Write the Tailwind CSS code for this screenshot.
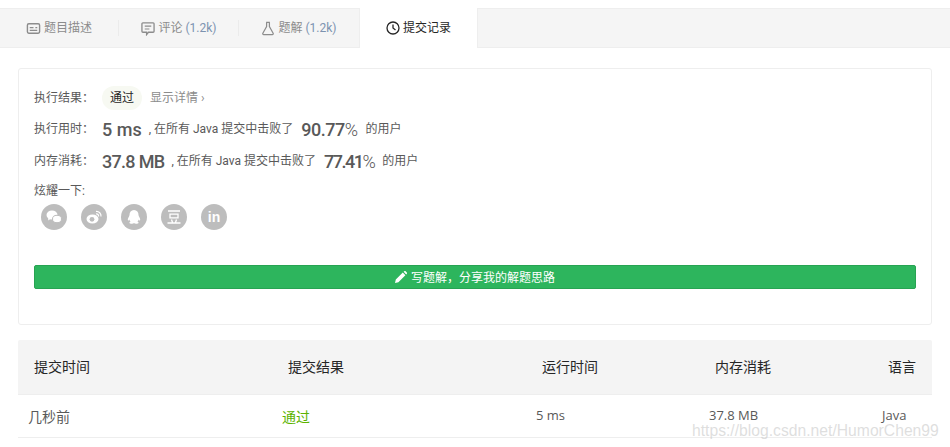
<!DOCTYPE html>
<html><head><meta charset="utf-8"><script src="https://cdn.jsdelivr.net/npm/@tailwindcss/browser@4"></script></head>
<body class="bg-white">
<div class="relative w-[950px] h-[447px] overflow-hidden font-['Roboto','Noto_Sans_CJK_SC',sans-serif] text-[12px] text-[#595959]">
  <div class="h-[8px]"></div>
  <!-- tabs -->
  <div class="flex h-[40px] bg-[#f5f5f5] border-y border-[#eeeeee] text-[#8c8c8c]">
    <div class="w-[119px] flex items-center justify-center"><div class="flex items-center gap-[3px] w-full justify-center border-r border-[#ebebeb] h-[16px]">
      <svg class="w-[15px] h-[15px]" viewBox="0 0 16 16" fill="none" stroke="#8c8c8c" stroke-width="1.5"><rect x="1.5" y="3" width="13" height="10" rx="1.500"/><path d="M4 7h4M4 10h8M10 7h2" stroke-width="1.200"/></svg><span>题目描述</span></div></div>
    <div class="w-[120px] flex items-center justify-center"><div class="flex items-center gap-[3px] w-full justify-center border-r border-[#ebebeb] h-[16px] pl-[1px]">
      <svg class="w-[14px] h-[15px]" viewBox="0 0 15 16" fill="none" stroke="#8c8c8c" stroke-width="1.400"><path d="M2 2h11a1 1 0 0 1 1 1v8a1 1 0 0 1-1 1H8l-2 2.500V12H2a1 1 0 0 1-1-1V3a1 1 0 0 1 1-1z"/><path d="M4 5.500h7M4 8.500h5" stroke-width="1.200"/></svg><span>评论 <span class="text-[#7c93b0]">(1.2k)</span></span></div></div>
    <div class="w-[120px] flex items-center justify-center gap-[3px]">
      <svg class="w-[14px] h-[15px]" viewBox="0 0 14 16" fill="none" stroke="#8c8c8c" stroke-width="1.300"><path d="M5 1.500h4M5.500 1.500v4.500L1.500 13a1 1 0 0 0 1 1.500h9a1 1 0 0 0 1-1.500L8.500 6V1.500"/></svg><span>题解 <span class="text-[#7c93b0]">(1.2k)</span></span></div>
    <div class="w-[119px] h-[40px] -mt-px bg-white border-x border-[#eeeeee] flex items-center justify-center gap-[3px] text-[#262626]">
      <svg class="w-[14px] h-[14px]" viewBox="0 0 14 14" fill="none" stroke="#262626" stroke-width="1.300"><circle cx="7" cy="7" r="6"/><path d="M7 3.500V7l2.500 2"/></svg><span>提交记录</span></div>
  </div>
  <!-- card -->
  <div class="mx-[18px] mt-[20px] w-[914px] h-[257px] border border-[#eeeeee] rounded-[3px] px-[15px] pt-[15px]">
    <div class="flex items-center h-[26px] pt-[1px]">
      <span class="w-[68px]">执行结果&#65306;</span>
      <span class="w-[40px] h-[24px] rounded-full bg-[#f7f9f2] text-[#262626] flex items-center justify-center">通过</span>
      <span class="ml-[8px] text-[#8c8c8c]">显示详情 ›</span>
    </div>
    <div class="flex items-center h-[24px] mt-[7px]">
      <span class="w-[68px]">执行用时&#65306;</span>
      <span class="text-[18px] font-medium">5 ms</span>
      <span class="ml-[7px]">, 在所有 Java 提交中击败了</span>
      <span class="ml-[8px] text-[18px] font-medium tracking-[-0.5px]">90.77<span class="font-light">%</span></span>
      <span class="ml-[8px]">的用户</span>
    </div>
    <div class="flex items-center h-[24px] mt-[8px]">
      <span class="w-[68px]">内存消耗&#65306;</span>
      <span class="text-[18px] font-medium tracking-[-0.7px]">37.8 MB</span>
      <span class="ml-[7px]">, 在所有 Java 提交中击败了</span>
      <span class="ml-[8px] text-[18px] font-medium tracking-[-1.500px]">77.41<span class="font-light">%</span></span>
      <span class="ml-[8px]">的用户</span>
    </div>
    <div class="mt-[9px] h-[18px] leading-[18px]">炫耀一下:</div>
    <div class="flex gap-[14px] ml-[7px] mt-[4px]">
      <div class="w-[26px] h-[26px] rounded-full bg-[#bdbdbd] flex items-center justify-center"><svg class="w-[18px] h-[18px]" viewBox="0 0 18 18" fill="#fff"><ellipse cx="7" cy="7" rx="5.500" ry="4.500"/><path d="M3.500 10l-.5 2.500 2.500-1.500z"/><ellipse cx="12" cy="11" rx="4.500" ry="3.700" stroke="#bdbdbd"/></svg></div>
      <div class="w-[26px] h-[26px] rounded-full bg-[#bdbdbd] flex items-center justify-center"><svg class="w-[18px] h-[18px]" viewBox="0 0 18 18"><ellipse cx="7.500" cy="11" rx="6" ry="4.500" fill="#fff"/><circle cx="7" cy="11.300" r="2.400" fill="#bdbdbd"/><path d="M11 3.500a4.500 4.500 0 0 1 5 5M11 6a2 2 0 0 1 2.500 2.500" fill="none" stroke="#fff" stroke-width="1.200"/></svg></div>
      <div class="w-[26px] h-[26px] rounded-full bg-[#bdbdbd] flex items-center justify-center"><svg class="w-[18px] h-[18px]" viewBox="0 0 18 18" fill="#fff"><path d="M9 2c3 0 4.500 2.200 4.500 5 0 .8.4 1.300.9 2.200.8 1.400 1 3 .5 3.300-.4.2-.9-.5-1.200-1.100-.2 1-.7 1.700-1.300 2.200.8.300 1.200.7 1.200 1.100 0 .6-1.200 1-2.600 1-1 0-1.700-.2-2-.6-.3.4-1 .6-2 .6-1.400 0-2.600-.4-2.600-1 0-.4.4-.8 1.200-1.100-.6-.5-1.100-1.200-1.300-2.200-.3.6-.8 1.300-1.200 1.100-.5-.3-.3-1.900.5-3.300.5-.9.9-1.400.9-2.200C4.500 4.200 6 2 9 2z"/></svg></div>
      <div class="w-[26px] h-[26px] rounded-full bg-[#bdbdbd] flex items-center justify-center"><svg class="w-[18px] h-[18px]" viewBox="0 0 18 18" fill="none" stroke="#fff" stroke-width="1.300"><path d="M3 3h12M5 6.200h8v3.600H5zM2.500 15h13M6.500 11.500l1 3M11.500 11.500l-1 3"/></svg></div>
      <div class="w-[26px] h-[26px] rounded-full bg-[#bdbdbd] flex items-center justify-center text-white text-[14px] font-bold font-['Liberation_Sans',sans-serif]">in</div>
    </div>
    <div class="mt-[35px] h-[24px] rounded-[2px] bg-[#2db55d] border border-[#27a352] text-white flex items-center justify-center gap-[4px]">
      <svg class="w-[12px] h-[12px]" viewBox="0 0 12 12" fill="#fff"><path d="M0 12l.8-3.400L7.800 1.600l2.600 2.600-7 7zM8.600.800l.7-.6a1 1 0 0 1 1.300 0l1.200 1.200a1 1 0 0 1 0 1.300l-.6.700z"/></svg><span class="pt-[1px]">写题解&#65292;分享我的解题思路</span>
    </div>
  </div>
  <!-- table -->
  <div class="ml-[18px] mt-[15px] w-[914px]">
    <div class="relative h-[55px] bg-[#f4f4f4] rounded-t-[2px] border-b border-[#eeeeee] text-[14px] text-[#262626] grid grid-cols-[254px_254px_173px_173px_60px] items-center">
      <span class="pl-[16px]">提交时间</span><span class="pl-[16px]">提交结果</span><span class="pl-[16px]">运行时间</span><span class="pl-[16px]">内存消耗</span><span class="justify-self-end pr-[16px]">语言</span>
    </div>
    <div class="h-[43px] border-b border-[#eeeeee] text-[13px] text-[#595959] font-['Open_Sans','Noto_Sans_CJK_SC',sans-serif] grid grid-cols-[254px_254px_173px_173px_60px] items-center">
      <span class="pl-[10px] text-[14px]">几秒前</span><span class="pl-[10px] text-[14px] text-[#5cb300]">通过</span><span class="pl-[10px]">5 ms</span><span class="pl-[10px]">37.8 MB</span><span class="pl-[10px]">Java</span>
    </div>
  </div>
  <span class="absolute left-[692px] top-[419px] text-[15.7px] font-['Liberation_Sans',sans-serif] text-[#c9c9c9]/60 whitespace-nowrap">https://blog.csdn.net/HumorChen99</span>
</div>
</body></html>
